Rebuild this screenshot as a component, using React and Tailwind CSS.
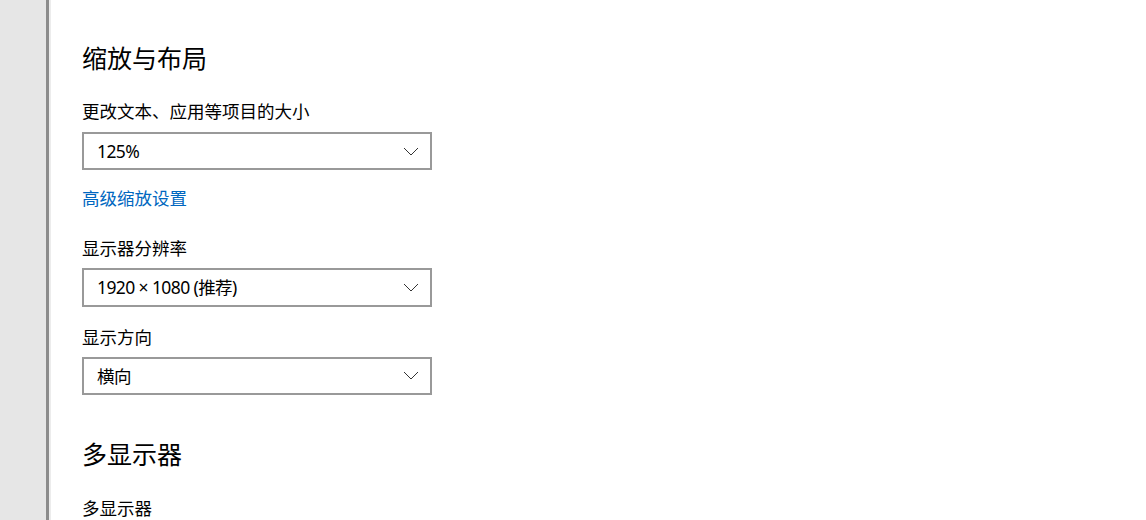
import React from "react";

const font = { fontFamily: '"Noto Sans", "Noto Sans CJK SC", sans-serif' };

function Chevron() {
  return (
    <svg width="16" height="9" viewBox="0 0 16 9" className="shrink-0">
      <polyline points="1,1 8,8 15,1" fill="none" stroke="#333333" strokeWidth="1" />
    </svg>
  );
}

function Dropdown({ value, className = "" }) {
  return (
    <div
      className={`flex h-[40px] w-[350px] items-center justify-between border-2 border-[#999999] bg-white pl-[13px] pr-[11px] ${className}`}
    >
      <span className="text-[17.5px] leading-[24px] tracking-[-0.6px] text-black">{value}</span>
      <Chevron />
    </div>
  );
}

export default function App() {
  return (
    <div
      className="flex h-[520px] w-full overflow-hidden bg-white"
      style={{ fontFamily: '"Noto Sans", "Noto Sans CJK SC", sans-serif' }}
    >
      {/* left nav strip */}
      <div className="w-[46px] shrink-0 bg-[#e6e6e6]" />
      <div className="w-[3px] shrink-0 bg-[#8c8c8c]" />
      <div className="w-[2px] shrink-0 bg-[#ececec]" />

      {/* settings content */}
      <div className="flex flex-col pl-[31px] pt-[41px]" style={font}>
        <h2 className="text-[25px] leading-[34px] font-normal text-black">缩放与布局</h2>

        <p className="mt-[24px] text-[17.5px] leading-[24px] text-black">更改文本、应用等项目的大小</p>
        <Dropdown value="125%" className="mt-[9px]" />

        <a href="#" className="mt-[16px] text-[17.5px] leading-[24px] text-[#0067c0]">
          高级缩放设置
        </a>

        <p className="mt-[26px] text-[17.5px] leading-[24px] text-black">显示器分辨率</p>
        <Dropdown value="1920 × 1080 (推荐)" className="mt-[8px]" />

        <p className="mt-[18px] text-[17.5px] leading-[24px] text-black">显示方向</p>
        <Dropdown value="横向" className="mt-[8px]" />

        <h2 className="mt-[42px] text-[25px] leading-[34px] font-normal text-black">多显示器</h2>

        <p className="mt-[25px] text-[17.5px] leading-[24px] text-black">多显示器</p>
      </div>
    </div>
  );
}
